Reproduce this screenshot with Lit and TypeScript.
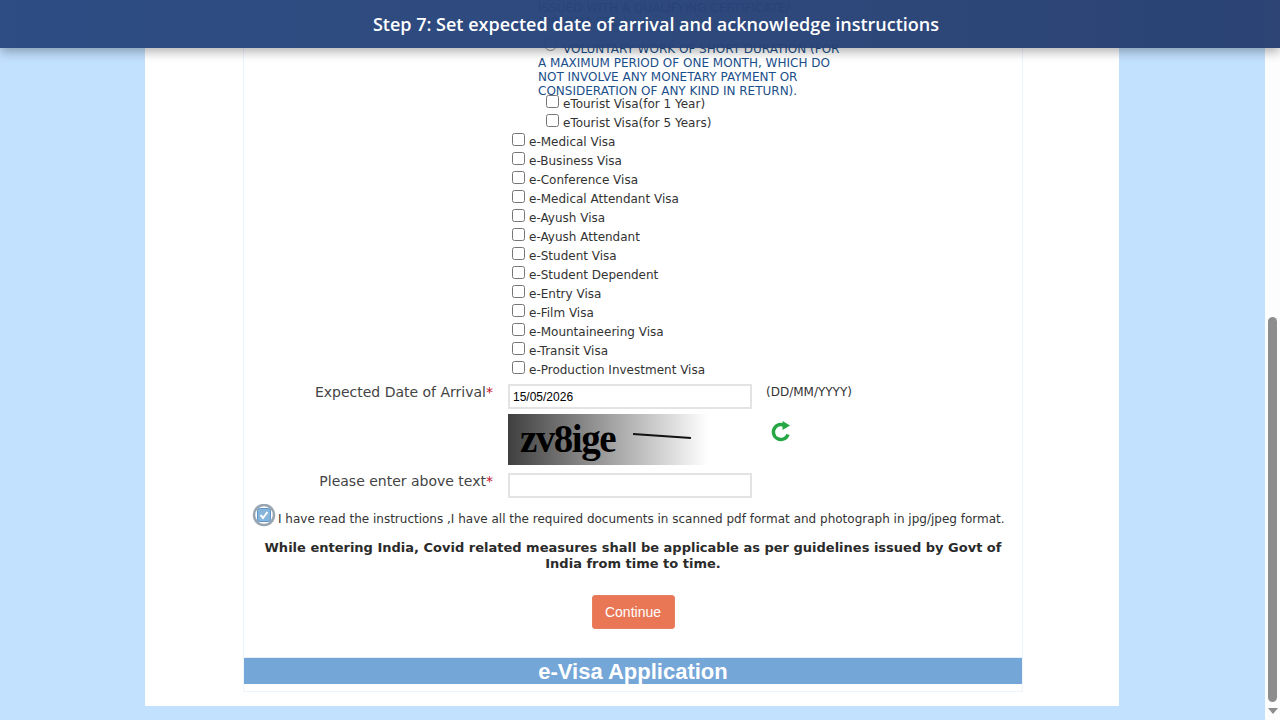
import { LitElement, html, css, svg } from "lit";
import { customElement } from "lit/decorators.js";

const visas = [
  "e-Medical Visa", "e-Business Visa", "e-Conference Visa", "e-Medical Attendant Visa",
  "e-Ayush Visa", "e-Ayush Attendant", "e-Student Visa", "e-Student Dependent",
  "e-Entry Visa", "e-Film Visa", "e-Mountaineering Visa", "e-Transit Visa", "e-Production Investment Visa",
];

@customElement("app-root")
export class AppRoot extends LitElement {
  static styles = css`
    :host { display: block; position: relative; width: 1280px; height: 720px; overflow: hidden; background: #c2e1ff; font-family: "DejaVu Sans", Tahoma, sans-serif; color: #333; }
    .banner { position: absolute; left: 0; top: 0; width: 1280px; height: 48px; display: flex; align-items: center; justify-content: center; box-sizing: border-box; padding-left: 32px; background: linear-gradient(90deg, rgba(40,72,128,.97) 0%, rgba(38,62,112,.97) 100%); box-shadow: 0 4px 10px rgba(0,0,0,.3); color: #fff; font: 600 18px "Open Sans", sans-serif; }
    .scroll { position: absolute; right: 0; top: 0; width: 15px; height: 720px; background: #fdfdfd; }
    .thumb { position: absolute; left: 3px; top: 317px; width: 9px; height: 385px; border-radius: 5px; background: #8d8d8d; }
    .arrow { position: absolute; left: 3px; top: 708px; width: 0; height: 0; border-left: 5px solid transparent; border-right: 5px solid transparent; border-top: 6px solid #8d8d8d; }
    .page { width: 974px; height: 706px; margin-left: 145px; background: #fff; box-sizing: border-box; padding-left: 98px; }
    .panel { width: 780px; height: 692px; box-sizing: border-box; border: 1px solid #eef4fb; border-top: 0; display: flex; flex-direction: column; }
    .natures { margin-left: 294px; width: 320px; height: 89px; padding-top: 1px; font-size: 12px; line-height: 14px; color: #1b4f8a; display: block; }
    .natures p { margin: 0; height: 14.3px; white-space: nowrap; }
    .vol { padding-top: 12px; }
    .vol .line1 { padding-left: 25px; position: relative; }
    .radio { position: absolute; left: 6px; top: -4px; width: 11px; height: 11px; border: 1px solid #8f8f8f; border-radius: 50%; }
    .opts { display: flex; flex-direction: column; margin-top: 4px; }
    .opt { height: 19px; display: flex; align-items: center; font-size: 12px; color: #333; padding-left: 268px; white-space: nowrap; }
    .opt.sub { padding-left: 302px; }
    .box { width: 11px; height: 11px; border: 1px solid #767676; border-radius: 2.5px; margin-right: 4px; position: relative; top: -2px; flex: none; background: #fff; }
    .row { display: flex; }
    .lab { width: 249px; text-align: right; font-size: 14px; color: #444; white-space: nowrap; }
    .req { color: #c8102e; }
    .field { width: 244px; height: 25px; margin-left: 15px; box-sizing: border-box; border: 2px solid #e3e3e3; background: #fff; color: #000; font: 12px "Liberation Sans", sans-serif; display: flex; align-items: center; padding-left: 3px; }
    .date { margin-top: 5px; }
    .date .lab { padding-top: 0; line-height: 17px; }
    .hint { margin-left: 14px; font-size: 12px; color: #333; line-height: 16px; }
    .captcha { margin-top: 5px; height: 51px; padding-left: 264px; }
    .capimg { width: 200px; height: 51px; flex: none; position: relative; overflow: hidden; background: linear-gradient(90deg, #3f3f3f, #fff); }
    .capimg span { position: absolute; left: 12px; top: 0; font: bold 39px/50px "Liberation Serif", serif; letter-spacing: -1.5px; color: #000; }
    .capimg i { position: absolute; left: 125px; top: 21px; width: 58px; height: 2px; background: #111; transform: rotate(4deg); }
    .refresh { margin-left: 62px; margin-top: 5px; }
    .text { margin-top: 8px; }
    .ack { margin-top: 6px; height: 33px; display: flex; align-items: flex-start; font-size: 12px; padding-left: 8px; white-space: nowrap; color: #333; }
    .ack svg { flex: none; margin-right: 2px; }
    .ack span { padding-top: 8px; }
    .covid { margin: 3px 8px 0; text-align: center; font-size: 13px; font-weight: bold; line-height: 16px; color: #2b2b2b; }
    .btnrow { display: flex; justify-content: center; margin-top: 23px; padding-right: 0; }
    .btn { width: 83px; height: 34px; box-sizing: border-box; background: #e97654; border: 1px solid #e8805f; border-radius: 3px; color: #fff; font: 14px "Liberation Sans", sans-serif; display: flex; align-items: center; justify-content: center; }
    .foot { margin-top: 28px; height: 27px; background: #74a6d7; color: #fff; font: bold 22px/27px "Liberation Sans", sans-serif; text-align: center; border-top: 1px solid #e6eef7; box-sizing: border-box; }
  `;

  render() {
    return html`
      <div class="page">
        <div class="panel">
          <div class="natures">
            <div>
              <p>ISSUED WITH A QUALIFYING CERTIFICATE/</p>
              <p>DIPLOMA ETC.)</p>
            </div>
            <div class="vol">
              <p class="line1"><span class="radio"></span>VOLUNTARY WORK OF SHORT DURATION (FOR</p>
              <p>A MAXIMUM PERIOD OF ONE MONTH, WHICH DO</p>
              <p>NOT INVOLVE ANY MONETARY PAYMENT OR</p>
              <p>CONSIDERATION OF ANY KIND IN RETURN).</p>
            </div>
          </div>
          <div class="opts">
            <div class="opt sub"><span class="box"></span>eTourist Visa(for 1 Year)</div>
            <div class="opt sub"><span class="box"></span>eTourist Visa(for 5 Years)</div>
            ${visas.map((v) => html`<div class="opt"><span class="box"></span>${v}</div>`)}
          </div>
          <div class="row date">
            <div class="lab">Expected Date of Arrival<span class="req">*</span></div>
            <div class="field">15/05/2026</div>
            <div class="hint">(DD/MM/YYYY)</div>
          </div>
          <div class="row captcha">
            <div class="capimg"><span>zv8ige</span><i></i></div>
            <svg class="refresh" width="22" height="24" viewBox="0 0 22 24">
              ${svg`<path d="M16.5 8 A7.5 7.5 0 1 0 18 15.5" fill="none" stroke="#25a744" stroke-width="3.4"/><path d="M12.5 2 L20 6.5 L12.5 11 Z" fill="#25a744"/>`}
            </svg>
          </div>
          <div class="row text">
            <div class="lab">Please enter above text<span class="req">*</span></div>
            <div class="field"></div>
          </div>
          <div class="ack">
            <svg width="24" height="24" viewBox="0 0 24 24">
              ${svg`<circle cx="12" cy="11" r="10" fill="#fff" stroke="#98a4b0" stroke-width="2.5"/><rect x="5.5" y="4.5" width="13" height="13" rx="2" fill="#86b5dc" stroke="#5f93c4"/><path d="M8.5 11 L11 14 L15.5 8" fill="none" stroke="#fff" stroke-width="2"/>`}
            </svg>
            <span>I have read the instructions ,I have all the required documents in scanned pdf format and photograph in jpg/jpeg format.</span>
          </div>
          <div class="covid">While entering India, Covid related measures shall be applicable as per guidelines issued by Govt of India from time to time.</div>
          <div class="btnrow"><div class="btn">Continue</div></div>
          <div class="foot">e-Visa Application</div>
        </div>
      </div>
      <div class="scroll"><div class="thumb"></div><div class="arrow"></div></div>
      <div class="banner">Step 7: Set expected date of arrival and acknowledge instructions</div>
    `;
  }
}
